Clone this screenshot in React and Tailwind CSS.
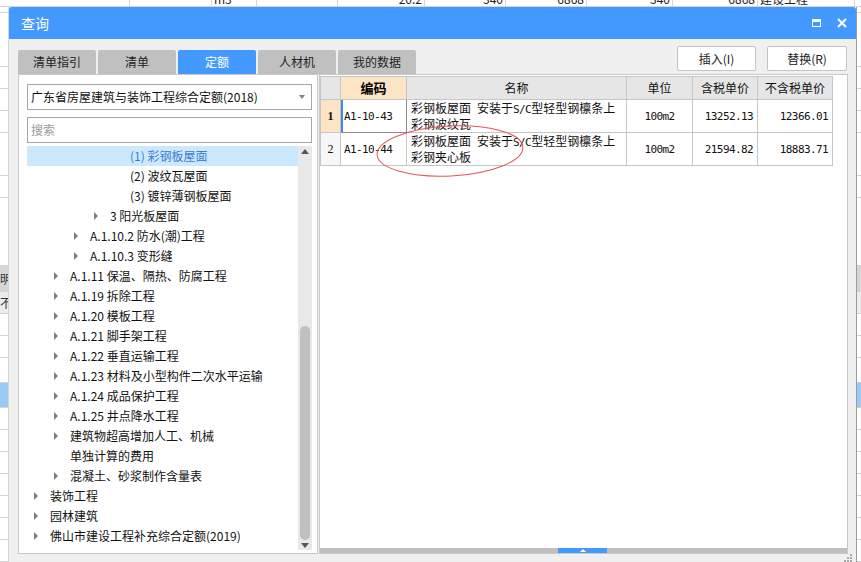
import React from "react";

const sans = "font-['Noto_Sans_CJK_SC',sans-serif]";
const mono = "font-['DejaVu_Sans_Mono',monospace] text-[11px] tracking-[-0.6px]";

const PL = ["pl-[7px]", "pl-[27px]", "pl-[47px]", "pl-[67px]", "pl-[87px]"];

const treeItems = [
  { t: "(1) 彩钢板屋面", l: 4, sel: true },
  { t: "(2) 波纹瓦屋面", l: 4 },
  { t: "(3) 镀锌薄钢板屋面", l: 4 },
  { t: "3 阳光板屋面", l: 3, a: true },
  { t: "A.1.10.2 防水(潮)工程", l: 2, a: true },
  { t: "A.1.10.3 变形缝", l: 2, a: true },
  { t: "A.1.11 保温、隔热、防腐工程", l: 1, a: true },
  { t: "A.1.19 拆除工程", l: 1, a: true },
  { t: "A.1.20 模板工程", l: 1, a: true },
  { t: "A.1.21 脚手架工程", l: 1, a: true },
  { t: "A.1.22 垂直运输工程", l: 1, a: true },
  { t: "A.1.23 材料及小型构件二次水平运输", l: 1, a: true },
  { t: "A.1.24 成品保护工程", l: 1, a: true },
  { t: "A.1.25 井点降水工程", l: 1, a: true },
  { t: "建筑物超高增加人工、机械", l: 1, a: true },
  { t: "单独计算的费用", l: 1 },
  { t: "混凝土、砂浆制作含量表", l: 1, a: true },
  { t: "装饰工程", l: 0, a: true },
  { t: "园林建筑", l: 0, a: true },
  { t: "佛山市建设工程补充综合定额(2019)", l: 0, a: true },
];

const bgRows = [
  { c: "h-[6px]" },
  { c: "h-[54px]" },
  { c: "h-[22px]" },
  { c: "h-[22px]" },
  { c: "h-[22px]" },
  { c: "h-[43px]" },
  { c: "h-[22px]" },
  { c: "h-[68px]" },
  { c: "h-[26px] bg-[#d6d6d6]", t: "明" },
  { c: "h-[22px] bg-[#ececec]", t: "不含" },
  { c: "h-[22px]" },
  { c: "h-[22px]" },
  { c: "h-[25px]" },
  { c: "h-[25px] bg-[#99c9f4]" },
  { c: "h-[22px]" },
  { c: "h-[22px]" },
  { c: "h-[22px]" },
  { c: "h-[22px]" },
  { c: "h-[22px]" },
  { c: "h-[22px]" },
  { c: "h-[22px]" },
];

const topCells = [
  { w: "w-[130px]", t: "" },
  { w: "w-[82px]", t: "" },
  { w: "w-[45px]", t: "m3", left: true },
  { w: "w-[81px]", t: "" },
  { w: "w-[87px]", t: "20.2" },
  { w: "w-[81px]", t: "340" },
  { w: "w-[81px]", t: "6868" },
  { w: "w-[86px]", t: "340" },
  { w: "w-[85px]", t: "6868" },
  { w: "w-[97px]", t: "建设工程", left: true },
];

function Arrow() {
  return (
    <span className="block w-0 h-0 border-y-[4px] border-y-transparent border-l-[4px] border-l-[#7d7d7d]" />
  );
}

function TreeRow({ item }) {
  return (
    <div
      className={`flex items-center h-[20px] ${PL[item.l]} ${
        item.sel ? "bg-[#cce8ff] text-[#3d7bd0]" : "text-[#111]"
      }`}
    >
      <span className="w-[16px] flex items-center">{item.a && <Arrow />}</span>
      <span className="whitespace-nowrap text-[12px] leading-none">{item.t}</span>
    </div>
  );
}

const tabs = ["清单指引", "清单", "定额", "人材机", "我的数据"];

export default function App() {
  return (
    <div className={`relative w-[861px] h-[562px] overflow-hidden bg-white ${sans}`}>
      {/* background spreadsheet */}
      <div className="flex flex-col">
        <div className="flex h-[20px] -mt-[13px] border-b border-[#d4d4d4] text-[12px] text-[#222]">
          {topCells.map((c, i) => (
            <div
              key={i}
              className={`${c.w} shrink-0 h-full border-r border-[#d4d4d4] flex items-end pb-[1px] px-[2px] ${
                c.left ? "justify-start" : "justify-end"
              } leading-none`}
            >
              {c.t}
            </div>
          ))}
          <div className="flex-1" />
        </div>
        {bgRows.map((r, i) => (
          <div
            key={i}
            className={`${r.c} border-b border-[#d4d4d4] flex items-center text-[12px] text-[#333] leading-none`}
          >
            {r.t}
          </div>
        ))}
      </div>

      {/* dialog window */}
      <div className="absolute left-[8px] top-[7px] w-[849px] h-[555px] bg-[#f0f0f0] border-l border-[#d6d6d6] border-r border-r-[#9c9c9c] flex flex-col">
        {/* title bar */}
        <div className="h-[32px] shrink-0 bg-[#4499ff] rounded-t-[3px] flex items-center pl-[12px] pr-[9px] text-white">
          <span className="text-[14px] leading-none">查询</span>
          <div className="ml-auto flex items-center gap-[16px]">
            <span className="block w-[9px] h-[8px] border-[1.5px] border-t-[3px] border-white" />
            <svg width="10" height="10" viewBox="0 0 10 10">
              <path d="M1 1 L9 9 M9 1 L1 9" stroke="white" strokeWidth="2" />
            </svg>
          </div>
        </div>

        {/* tabs + buttons */}
        <div className="h-[35px] shrink-0 flex pl-[9px] pr-[9px]">
          <div className="flex items-end gap-[2px]">
            {tabs.map((t) => (
              <div
                key={t}
                className={`w-[78px] h-[24px] rounded-t-[2px] flex items-center justify-center text-[12px] leading-none ${
                  t === "定额" ? "bg-[#4499ff] text-white" : "bg-[#c0c0c0] text-[#222]"
                }`}
              >
                {t}
              </div>
            ))}
          </div>
          <div className="ml-auto flex gap-[11px] pt-[7px]">
            <div className="w-[79px] h-[25px] bg-white border border-[#c4c4c4] rounded-[2px] flex items-center justify-center text-[12px] text-[#222] leading-none">
              插入(I)
            </div>
            <div className="w-[80px] h-[25px] bg-white border border-[#c4c4c4] rounded-[2px] flex items-center justify-center text-[12px] text-[#222] leading-none">
              替换(R)
            </div>
          </div>
        </div>

        {/* panels */}
        <div className="h-[480px] shrink-0 flex pl-[9px] gap-[1px]">
          {/* left panel */}
          <div className="w-[300px] h-full bg-white border border-[#c8c8c8] flex flex-col pl-[8px] pr-[5px] pt-[9px] pb-[3px]">
            <div className="h-[26px] shrink-0 border border-[#a6a6a6] flex items-center pl-[3px] pr-[6px] text-[12px] text-[#111] leading-none">
              <span className="whitespace-nowrap">广东省房屋建筑与装饰工程综合定额(2018)</span>
              <span className="ml-auto block w-0 h-0 border-x-[3px] border-x-transparent border-t-[4px] border-t-[#808080]" />
            </div>
            <div className="h-[26px] shrink-0 mt-[7px] border border-[#a6a6a6] flex items-center pl-[3px] text-[12px] text-[#9a9a9a] leading-none">
              搜索
            </div>
            <div className="flex-1 mt-[3px] flex min-h-0">
              <div className="flex-1 flex flex-col overflow-hidden">
                {treeItems.map((it, i) => (
                  <TreeRow key={i} item={it} />
                ))}
              </div>
              <div className="w-[14px] bg-[#e8e8e8] flex flex-col items-center">
                <span className="block mt-[3px] w-0 h-0 border-x-[4px] border-x-transparent border-b-[5px] border-b-[#555]" />
                <div className="mt-[172px] w-[10px] h-[214px] rounded-full bg-[#c0c0c0]" />
                <div className="flex-1" />
                <span className="block mb-[2px] w-0 h-0 border-x-[4px] border-x-transparent border-t-[5px] border-t-[#555]" />
              </div>
            </div>
          </div>

          {/* right panel */}
          <div className="w-[529px] h-full bg-white border border-[#c8c8c8] flex flex-col">
            <table className="mt-[1px] border-collapse table-fixed w-[512px] text-[12px] text-[#111]">
              <colgroup>
                <col className="w-[20px]" />
                <col className="w-[66px]" />
                <col className="w-[220px]" />
                <col className="w-[66px]" />
                <col className="w-[65px]" />
                <col className="w-[75px]" />
              </colgroup>
              <thead>
                <tr className="h-[23px]">
                  <th className="border border-[#c6c6c6] bg-[#e6e6e6]" />
                  <th className="border border-[#c6c6c6] bg-[#fde4c4] text-[13px] font-bold text-black">编码</th>
                  <th className="border border-[#c6c6c6] bg-[#e6e6e6] font-normal">名称</th>
                  <th className="border border-[#c6c6c6] bg-[#e6e6e6] font-normal">单位</th>
                  <th className="border border-[#c6c6c6] bg-[#e6e6e6] font-normal">含税单价</th>
                  <th className="border border-[#c6c6c6] bg-[#e6e6e6] font-normal">不含税单价</th>
                </tr>
              </thead>
              <tbody>
                <tr className="h-[33px]">
                  <td className="border border-[#c6c6c6] bg-[#fde4c4] text-center font-['Liberation_Serif',serif] font-bold">1</td>
                  <td className="border border-[#c6c6c6] border-r-[#8a8a8a] border-b-[#8a8a8a] shadow-[inset_2px_0_0_#3c8ce6] pl-[3px]">
                    <span className={mono}>A1-10-43</span>
                  </td>
                  <td className="border border-[#c6c6c6] pl-[4px] leading-[14px] whitespace-nowrap">
                    彩钢板屋面<span className={mono}> </span>安装于<span className={mono}>S/C</span>型轻型钢檩条上
                    <br />
                    彩钢波纹瓦
                  </td>
                  <td className="border border-[#c6c6c6] text-center">
                    <span className={mono}>100m2</span>
                  </td>
                  <td className="border border-[#c6c6c6] text-right pr-[4px]">
                    <span className={mono}>13252.13</span>
                  </td>
                  <td className="border border-[#c6c6c6] text-right pr-[4px]">
                    <span className={mono}>12366.01</span>
                  </td>
                </tr>
                <tr className="h-[33px]">
                  <td className="border border-[#c6c6c6] bg-[#f7f7f7] text-center font-['Liberation_Serif',serif]">2</td>
                  <td className="border border-[#c6c6c6] pl-[3px]">
                    <span className={mono}>A1-10-44</span>
                  </td>
                  <td className="border border-[#c6c6c6] pl-[4px] leading-[14px] whitespace-nowrap">
                    彩钢板屋面<span className={mono}> </span>安装于<span className={mono}>S/C</span>型轻型钢檩条上
                    <br />
                    彩钢夹心板
                  </td>
                  <td className="border border-[#c6c6c6] text-center">
                    <span className={mono}>100m2</span>
                  </td>
                  <td className="border border-[#c6c6c6] text-right pr-[4px]">
                    <span className={mono}>21594.82</span>
                  </td>
                  <td className="border border-[#c6c6c6] text-right pr-[4px]">
                    <span className={mono}>18883.71</span>
                  </td>
                </tr>
              </tbody>
            </table>
            <div className="flex-1" />
            <div className="h-[5px] shrink-0 flex bg-[#c0c0c0]">
              <div className="w-[238px]" />
              <div className="w-[49px] bg-[#4499ff] flex items-center justify-center">
                <span className="block w-0 h-0 border-x-[3px] border-x-transparent border-b-[3px] border-b-white" />
              </div>
            </div>
          </div>
        </div>

        {/* bottom strip with resize grip */}
        <div className="flex-1 flex items-end justify-end pr-[3px]">
          <svg width="9" height="8" viewBox="0 0 9 8">
            <rect x="6" y="0" width="2" height="2" fill="#a8a8a8" />
            <rect x="3" y="3" width="2" height="2" fill="#a8a8a8" />
            <rect x="6" y="3" width="2" height="2" fill="#a8a8a8" />
            <rect x="0" y="6" width="2" height="2" fill="#a8a8a8" />
            <rect x="3" y="6" width="2" height="2" fill="#a8a8a8" />
            <rect x="6" y="6" width="2" height="2" fill="#a8a8a8" />
          </svg>
        </div>
      </div>

      {/* red annotation ellipse */}
      <svg className="absolute left-0 top-0 pointer-events-none" width="861" height="562">
        <ellipse
          cx="450"
          cy="151"
          rx="73"
          ry="25"
          transform="rotate(-3 450 151)"
          fill="none"
          stroke="#e5555a"
          strokeWidth="1"
        />
      </svg>
    </div>
  );
}
